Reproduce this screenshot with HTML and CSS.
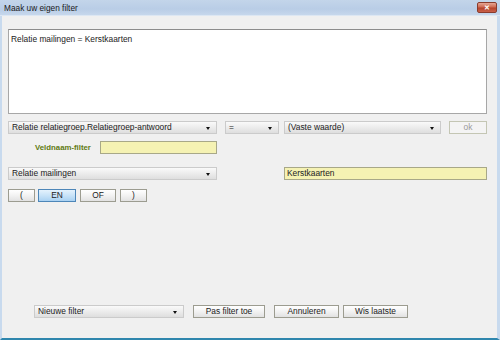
FILE: index.html
```html
<!DOCTYPE html>
<html>
<head>
<meta charset="utf-8">
<link rel="stylesheet" href="styles.css">
</head>
<body>
<div class="window">
  <div class="titlebar">
    <span class="title">Maak uw eigen filter</span>
    <div class="close"><span>✕</span></div>
  </div>
  <div class="content">
    <div class="textarea">Relatie mailingen = Kerstkaarten</div>
    <div class="row row1">
      <div class="combo w-field">Relatie relatiegroep.Relatiegroep-antwoord<i class="arrow"></i></div>
      <div class="combo w-op">=<i class="arrow"></i></div>
      <div class="combo w-val">(Vaste waarde)<i class="arrow"></i></div>
      <div class="btn btn-ok">ok</div>
    </div>
    <div class="row row2">
      <span class="label">Veldnaam-filter</span>
      <div class="input w-filter"></div>
    </div>
    <div class="row row3">
      <div class="combo w-field">Relatie mailingen<i class="arrow"></i></div>
      <div class="input w-value">Kerstkaarten</div>
    </div>
    <div class="row row4">
      <div class="btn w-paren">(</div>
      <div class="btn btn-active w-en">EN</div>
      <div class="btn w-of">OF</div>
      <div class="btn w-paren">)</div>
    </div>
    <div class="spacer"></div>
    <div class="row bottom">
      <div class="combo w-new">Nieuwe filter<i class="arrow"></i></div>
      <div class="btn w-apply">Pas filter toe</div>
      <div class="btn w-cancel">Annuleren</div>
      <div class="btn w-clear">Wis laatste</div>
    </div>
  </div>
</div>
</body>
</html>
```
FILE: styles.css
```css
* { box-sizing: border-box; }
html, body { margin: 0; padding: 0; }
body {
  width: 500px;
  height: 340px;
  overflow: hidden;
  font-family: "Liberation Sans", Arial, sans-serif;
  font-size: 8.4px;
  color: #222;
}
.window {
  width: 500px;
  height: 340px;
  display: flex;
  flex-direction: column;
  background: #f0f0f0;
  border-left: 2px solid #c8daee;
  border-right: 3px solid #c8daee;
  border-bottom: 2px solid #2f86ad;
}
.titlebar {
  height: 16px;
  flex: none;
  display: flex;
  align-items: center;
  justify-content: space-between;
  background: linear-gradient(#c3d5ea, #b9cde6 60%, #c6d7ec);
  margin: 0 -3px 0 -2px;
  padding: 0 3px 0 4px;
  border-bottom: 1px solid #dde7f3;
}
.title {
  font-size: 8.3px;
  color: #1a1a1a;
  padding-top: 1px;
}
.close {
  width: 20px;
  height: 11px;
  border: 1px solid #8a3b2c;
  border-radius: 2px;
  background: linear-gradient(#e5a594, #cf6a52 45%, #b5432b 55%, #c9604a);
  display: flex;
  align-items: center;
  justify-content: center;
  color: #fff;
  font-size: 7px;
  font-weight: bold;
  line-height: 1;
}
.content {
  flex: 1;
  display: flex;
  flex-direction: column;
  padding: 13px 10px 20px 6px;
}
.textarea {
  height: 85px;
  flex: none;
  background: #fff;
  border: 1px solid #a7a7a7;
  border-top-color: #8c8c8c;
  padding: 4px 2px;
}
.row {
  display: flex;
  align-items: center;
  height: 13px;
  flex: none;
}
.row1 { margin-top: 7px; }
.row2 { margin-top: 7px; }
.row3 { margin-top: 13px; }
.row4 { margin-top: 9px; }
.combo {
  position: relative;
  flex: none;
  height: 13px;
  border: 1px solid #cbcbcb;
  background: linear-gradient(#fafafa, #ececec 50%, #dedede);
  padding: 0 3px;
  line-height: 11px;
  white-space: nowrap;
  overflow: hidden;
}
.arrow {
  position: absolute;
  right: 6px;
  top: 5px;
  width: 0;
  height: 0;
  border-left: 2.5px solid transparent;
  border-right: 2.5px solid transparent;
  border-top: 3px solid #111;
}
.btn {
  flex: none;
  height: 13px;
  border: 1px solid #9c9c90;
  background: linear-gradient(#ffffff, #f2f2f2 50%, #e2e2e2);
  display: flex;
  align-items: center;
  justify-content: center;
  line-height: 1;
  white-space: nowrap;
}
.btn-active {
  border-color: #4d86b8;
  background: linear-gradient(#e4f2fd, #c8e3f8 50%, #a9d1f2);
}
.btn-ok {
  margin-left: 8px;
  width: 38px;
  border-color: #c4c6b4;
  color: #9a9a9a;
  background: #f4f4f4;
}
.input {
  flex: none;
  height: 13px;
  background: #f5f2b3;
  border: 1px solid #a8a888;
  padding: 0 2px;
  line-height: 11px;
}
.label {
  flex: none;
  margin-left: 27px;
  width: 65px;
  font-weight: bold;
  color: #5f7a12;
  font-size: 7.8px;
  white-space: nowrap;
}
.w-field { width: 209px; }
.w-op { width: 54px; margin-left: 8px; }
.w-val { width: 157px; margin-left: 5px; }
.w-filter { width: 117px; }
.w-value { width: 203px; margin-left: 67px; }
.w-paren { width: 27px; }
.w-en { width: 38px; margin-left: 3px; }
.w-of { width: 36px; margin-left: 4px; }
.w-of + .w-paren { margin-left: 4px; }
.spacer { flex: 1; }
.bottom .w-new { width: 150px; margin-left: 26px; }
.w-apply { width: 72px; margin-left: 9px; }
.w-cancel { width: 65px; margin-left: 9px; }
.w-clear { width: 65px; margin-left: 4px; }
```
